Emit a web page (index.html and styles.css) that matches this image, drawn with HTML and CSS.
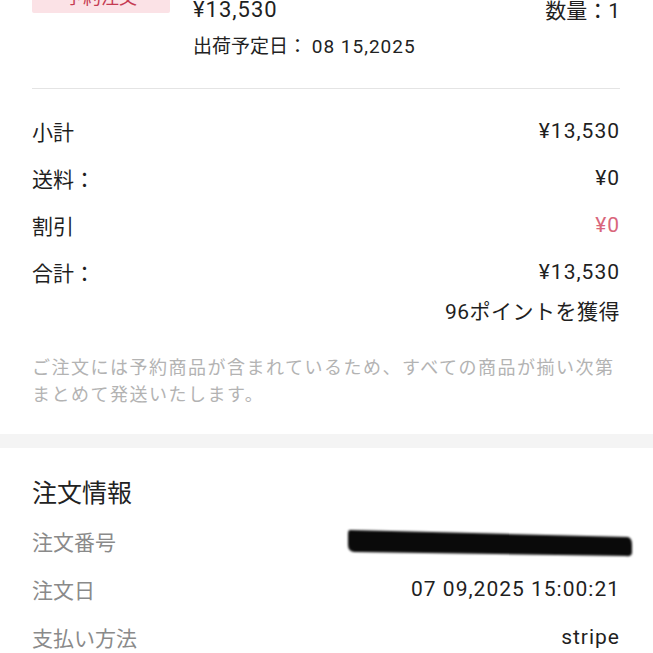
FILE: index.html
```html
<!DOCTYPE html>
<html lang="ja">
<head>
<meta charset="utf-8">
<link rel="stylesheet" href="styles.css">
</head>
<body>
<div class="card">
  <section class="product">
    <div class="badge">予約注文</div>
    <div class="product-info">
      <div class="price-row">
        <span class="price num">¥13,530</span>
        <span class="qty">数量：1</span>
      </div>
      <div class="ship">出荷予定日： <span class="num">08 15,2025</span></div>
    </div>
  </section>

  <section class="summary">
    <div class="row"><span>小計</span><span class="num">¥13,530</span></div>
    <div class="row"><span>送料：</span><span class="num">¥0</span></div>
    <div class="row"><span>割引</span><span class="num discount">¥0</span></div>
    <div class="row"><span>合計：</span><span class="num">¥13,530</span></div>
    <div class="points">96ポイントを獲得</div>
    <p class="note">ご注文には予約商品が含まれているため、すべての商品が揃い次第まとめて発送いたします。</p>
  </section>
</div>

<div class="band"></div>

<div class="card">
  <section class="order">
    <h2 class="order-title">注文情報</h2>
    <div class="info-row">
      <span class="label">注文番号</span>
      <svg class="redact" width="290" height="34" viewBox="0 0 290 34">
        <path d="M4 5 L282 12 Q286 13 286 20 L286 28 Q285 32 280 31 L8 27 Q2 26 2 20 L2 9 Q2 5 4 5 Z" fill="#0a0a0a"/>
      </svg>
    </div>
    <div class="info-row"><span class="label">注文日</span><span class="value num">07 09,2025 15:00:21</span></div>
    <div class="info-row"><span class="label">支払い方法</span><span class="value num">stripe</span></div>
  </section>
</div>
</body>
</html>
```

FILE: styles.css
```css
* { box-sizing: border-box; }
html, body {
  margin: 0;
  padding: 0;
  background: #ffffff;
  overflow: hidden;
}
body {
  font-family: Roboto, "Noto Sans CJK JP", sans-serif;
  color: #1f1f1f;
}
.num {
  letter-spacing: 1px;
}
.card {
  padding: 0 33px 0 32px;
}
.product {
  display: flex;
  gap: 23px;
  padding-bottom: 28px;
  border-bottom: 1px solid #e4e4e4;
}
.badge {
  width: 138px;
  height: 28px;
  margin-top: -15px;
  background: #fbe2e6;
  color: #c53b52;
  font-size: 18px;
  line-height: 26px;
  text-align: center;
  border-radius: 2px;
}
.product-info {
  flex: 1;
}
.price-row {
  display: flex;
  justify-content: space-between;
  align-items: flex-start;
}
.price {
  font-size: 22px;
  line-height: 19px;
}
.qty {
  font-size: 21px;
  line-height: 22px;
}
.ship {
  margin-top: 12px;
  font-size: 19px;
  line-height: 26px;
  color: #222;
}
.summary {
  padding-top: 18px;
  padding-bottom: 26px;
}
.row {
  display: flex;
  justify-content: space-between;
  align-items: center;
  height: 47px;
  font-size: 21px;
}
.discount {
  color: #d9667b;
}
.points {
  text-align: right;
  font-size: 21px;
  letter-spacing: 0.5px;
  line-height: 26px;
  margin-top: 4px;
}
.note {
  margin: 29px 0 0;
  font-size: 18px;
  line-height: 27px;
  letter-spacing: 1.5px;
  color: #b3b3b3;
}
.band {
  height: 14px;
  background: #f4f4f4;
}
.order {
  padding-top: 29px;
}
.order-title {
  margin: 0 0 6px;
  font-weight: 400;
  font-size: 25px;
  line-height: 34px;
  color: #222;
}
.info-row {
  display: flex;
  justify-content: space-between;
  align-items: center;
  height: 48px;
  font-size: 21px;
}
.label {
  color: #8a8a8a;
}
.value {
  color: #1f1f1f;
}
.redact {
  margin-right: -16px;
  margin-top: 2px;
  filter: blur(0.8px);
}
```
